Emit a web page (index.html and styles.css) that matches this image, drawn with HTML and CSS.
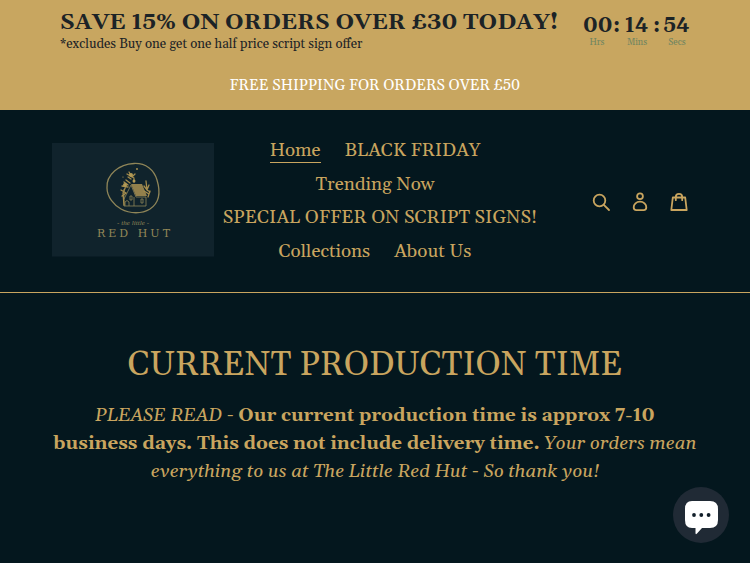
FILE: index.html
```
<!DOCTYPE html>
<html lang="en">
<head>
<meta charset="utf-8">
<title>The Little Red Hut</title>
<link rel="stylesheet" href="styles.css">
</head>
<body>
<div class="promo">
  <div class="offer">
    <div class="offer-text">
      <div class="offer-title">SAVE 15% ON ORDERS OVER £30 TODAY!</div>
      <div class="offer-note">*excludes Buy one get one half price script sign offer</div>
    </div>
    <div class="timer">
      <div class="unit"><b>00</b><small>Hrs</small></div><b class="colon">:</b>
      <div class="unit"><b>14</b><small>Mins</small></div><b class="colon">:</b>
      <div class="unit"><b>54</b><small>Secs</small></div>
    </div>
  </div>
  <div class="shipping">FREE SHIPPING FOR ORDERS OVER £50</div>
</div>
<header class="header">
  <a class="logo">
    <svg width="162" height="114" viewBox="0 0 162 114">
      <rect width="162" height="113.500" fill="#10232c"/>
      <g fill="none" stroke="#8f8558" stroke-width="1.3">
        <path d="M82 20.500C94 20 102 27 105 37C109 50 107 60 98 66C90 71 78 71 69 66C62 62 55 54 55 45C54 32 67 21 82 20.500Z"/>
        <path stroke-width=".8" d="M72 46V63H94V54M82 54V63M72 56L79 42L84 54H94M73 63V59Q75 56 77 59V63M78 53H80V57H78ZM89 56H91V60H89Z"/>
      </g>
      <path d="M79 41H90L95 53H84Z" fill="#92804c"/>
      <g fill="none" stroke="#a48c4d" stroke-width="1.300" stroke-linecap="round">
        <path d="M72 62L71 50L74 43M69 47L74 50L70 53M70 43L76 44M72 39L76 42M74 37L78 40M75 31L82 35M77 29L80 34L83 31M79 36L76 34M82 39V36M92 43L95 47L97 42M94 38L95 47L98 49M92 48L97 51M96 54L98 48"/>
      </g>
      <g fill="#b39a55"><circle cx="85" cy="26" r=".9"/><circle cx="71" cy="34" r=".6"/><circle cx="79" cy="32" r="2"/><circle cx="73" cy="42" r="2"/><circle cx="82" cy="38" r="1.500"/></g>
      <text class="logo-script" x="65" y="81.500" textLength="32">- the little -</text>
      <text class="logo-name" x="45" y="94" textLength="73">RED HUT</text>
    </svg>
  </a>
  <nav class="nav">
    <div class="row"><a class="active">Home</a><a>BLACK FRIDAY</a></div>
    <div class="row"><a>Trending Now</a></div>
    <div class="row wide"><a>SPECIAL OFFER ON SCRIPT SIGNS!</a></div>
    <div class="row"><a>Collections</a><a>About Us</a></div>
  </nav>
  <div class="icons">
    <svg width="20" height="20" viewBox="0 0 20 20"><circle cx="8.500" cy="8.500" r="5.800"/><path d="M12.800 12.800L18 18"/></svg>
    <svg width="20" height="20" viewBox="0 0 20 20"><circle cx="10" cy="4.200" r="2.900"/><path d="M10 9.600C6.300 9.600 3.700 12.300 3.700 15.300C3.700 17.500 4.500 18.200 6.300 18.200H13.700C15.500 18.200 16.300 17.500 16.300 15.300C16.300 12.300 13.700 9.600 10 9.600Z"/></svg>
    <svg width="20" height="20" viewBox="0 0 20 20"><path d="M3.800 5.500H16.200L17.700 18H2.300ZM6.800 8.200V5C6.800 .8 13.200 .8 13.200 5V8.200"/></svg>
  </div>
</header>
<main class="content">
  <h1>CURRENT PRODUCTION TIME</h1>
  <p>
    <em>PLEASE READ</em> - <strong>Our current production time is approx 7-10</strong><br>
    <strong>business days. This does not include delivery time.</strong> <em>Your orders mean</em><br>
    <em>everything to us at The Little Red Hut - So thank you!</em>
  </p>
</main>
<button class="chat" aria-label="Chat">
  <svg width="56" height="56" viewBox="0 0 56 56"><path fill="#fff" d="M19 14H37Q45 14 45 22V33Q45 41 37 41H29L24 46.500Q22.500 48 22.500 46V41H19Q12 41 12 33V22Q12 14 19 14Z"/><g fill="#111e29"><circle cx="21" cy="28" r="1.900"/><circle cx="28.300" cy="28" r="1.900"/><circle cx="35.600" cy="28" r="1.900"/></g></svg>
</button>
</body>
</html>
```
FILE: styles.css
```
* { box-sizing: border-box; }
body {
  margin: 0;
  height: 563px;
  overflow: hidden;
  background: #04171e;
  color: #c9a55f;
  font-family: Gelasio, Georgia, "Liberation Serif", serif;
  font-variant-numeric: lining-nums;
}
.promo { height: 110px; background: #c8a660; color: #1c2326; }
.offer { display: flex; justify-content: space-between; height: 73px; padding: 9px 60px 0; }
.offer-title { font-size: 22.680px; line-height: 27px; font-weight: 700; white-space: nowrap; }
.offer-note { font-size: 13.150px; line-height: 17px; white-space: nowrap; }
.timer { display: flex; padding-top: 5px; font-size: 21px; line-height: 24px; }
.unit { width: 27px; text-align: center; }
.unit b, .unit small { display: block; }
.unit small { font-size: 9px; line-height: 9px; color: #6f8560; padding-left: 1px; }
.colon { width: 13px; text-align: center; }
.shipping { color: #fff; text-align: center; font-size: 15px; line-height: 26px; }
.header { display: flex; align-items: center; height: 183px; border-bottom: 1px solid #c9a55f; padding: 0 60px 0 52px; }
.logo { width: 162px; height: 114px; margin-top: -2px; }
.logo svg { display: block; }
.logo-script { font: italic 7px "Liberation Serif", serif; fill: #938858; }
.logo-name { font: 11px "DejaVu Serif", serif; fill: #938858; }
.nav { width: 332px; }
.row { display: flex; justify-content: center; gap: 24px; height: 33.750px; align-items: center; padding-right: 10px; }
.wide { padding-right: 0; }
.row a { font-size: 18.750px; line-height: 25px; white-space: nowrap; }
.row .active { border-bottom: 1px solid #c9a55f; line-height: 25px; height: 25px; }
.icons { display: flex; gap: 19px; margin: 1px 0 0 45px; }
.icons svg { fill: none; stroke: #c9a55f; stroke-width: 1.800; stroke-linejoin: round; stroke-linecap: round; }
.content { padding-top: 51px; text-align: center; white-space: nowrap; }
h1 { margin: 0; font-size: 33.800px; line-height: 44px; font-weight: 400; }
p { margin: 14px 0 0; font-size: 18.770px; line-height: 28px; }
.chat { position: absolute; right: 21px; bottom: 20px; width: 56px; height: 56px; padding: 0; border: 0; border-radius: 50%; background: #202a35; }
.chat svg { display: block; }
```
